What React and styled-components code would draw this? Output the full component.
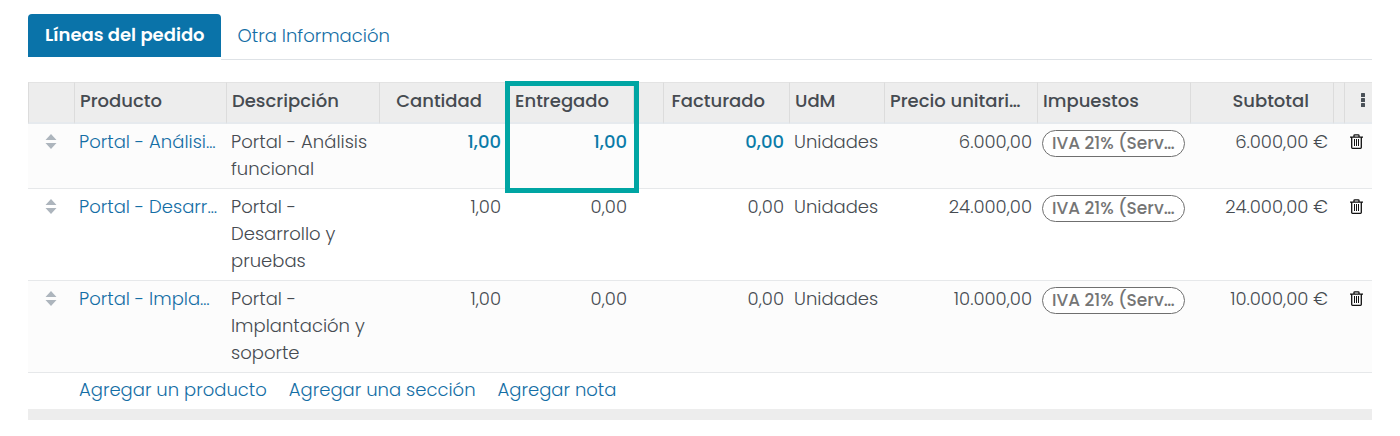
import React from "react";
import styled, { createGlobalStyle } from "styled-components";

const GlobalStyle = createGlobalStyle`
  *, *::before, *::after { box-sizing: border-box; }
  body {
    margin: 0;
    background: #fff;
    color: #464b51;
    font-family: Poppins, Inter, "Open Sans", sans-serif;
    font-size: 18px;
    font-weight: 300;
    line-height: 27px;
  }
  button { font: inherit; color: inherit; background: none; border: 0; padding: 0; cursor: pointer; }
`;

const Page = styled.main`
  padding: 14px 28px 16px;
`;

const TabBar = styled.div`
  display: flex;
  align-items: flex-start;
  margin-bottom: 22px;
`;

const Tab = styled.button`
  && {
    height: ${(p) => (p.$active ? 43 : 45)}px;
    padding: 0 16px 2px 17px;
    white-space: nowrap;
    border-radius: 4px 4px 0 0;
    color: ${(p) => (p.$active ? "#fff" : "#146ea5")};
    background: ${(p) => (p.$active ? "#0a73a9" : "transparent")};
    font-weight: ${(p) => (p.$active ? 600 : 300)};
  }
`;

const TabRest = styled.div`
  flex: 1;
  border-bottom: 1px solid #dee2e6;
`;

const Table = styled.table`
  width: 100%;
  table-layout: fixed;
  border-collapse: separate;
  border-spacing: 0;
`;

const Col = styled.col`
  width: ${(p) => p.$w}px;
`;

const Head = styled.th`
  position: relative;
  height: 42px;
  padding: 0 ${(p) => (p.$right ? 24 : p.$menu ? 7 : 5)}px 5px ${(p) => (p.$tight ? 0 : 5)}px;
  background: #ededed;
  border-top: 1px solid #e3e3e3;
  border-left: 1px solid #dcdcdc;
  border-bottom: 2px solid #e6eaee;
  text-align: ${(p) => (p.$right ? "right" : "left")};
  font-weight: 500;
  white-space: nowrap;
`;

const Row = styled.tr`
  background: ${(p) => (p.$shaded ? "#fcfcfc" : "#fff")};
`;

const Cell = styled.td`
  padding: 4px ${(p) => (p.$menu ? 9 : p.$wide ? 6 : 5)}px 6px ${(p) => (p.$right ? 0 : 5)}px;
  border-bottom: 1px solid #e6e8ea;
  vertical-align: top;
  text-align: ${(p) => (p.$right ? "right" : "left")};
  white-space: ${(p) => (p.$wrap ? "normal" : "nowrap")};
  color: ${(p) => (p.$strong ? "#0a7ba8" : "inherit")};
  font-weight: ${(p) => (p.$strong ? 500 : 300)};
`;

const Link = styled.a`
  color: #146ea5;
  text-decoration: none;
`;

const IconButton = styled.button`
  display: flex;
  align-items: center;
  justify-content: ${(p) => p.$align || "center"};
  width: 100%;
  height: 27px;
`;

const Tag = styled.span`
  display: block;
  height: 27px;
  margin-top: 2px;
  padding: 0 9px;
  border: 1px solid #6f6f6f;
  border-radius: 14px;
  background: #fff;
  color: #757575;
  font-size: 17px;
  font-weight: 500;
  line-height: 25px;
`;

const Highlight = styled.div`
  position: absolute;
  z-index: 1;
  top: -2px;
  left: -2px;
  width: 134px;
  height: 112px;
  border: 5px solid #00a5a3;
  pointer-events: none;
`;

const Actions = styled.div`
  display: flex;
  gap: 22px;
  padding: 3px 51px 6px;
  border-bottom: 11px solid #ededed;
`;

const SortIcon = () => (
  <svg width="12" height="15" viewBox="0 0 12 15" fill="#adb5bd" aria-hidden="true">
    <path d="M6 0 11.5 6H.5zM6 15 .5 9h11z" />
  </svg>
);

const TrashIcon = () => (
  <svg width="13" height="15" viewBox="0 0 13 15" fill="none" stroke="#111" aria-hidden="true">
    <path d="M0 3.2h13M4 3V1.6Q4 .8 4.8 .8h3.4Q9 .8 9 1.6V3M1.7 3.5v10Q1.7 14.3 2.5 14.3h8Q11.3 14.3 11.3 13.5v-10" strokeWidth="1.3" />
    <path d="M4.5 5v7M6.5 5v7M8.5 5v7" strokeWidth="1" />
  </svg>
);

const DotsIcon = () => (
  <svg width="4" height="14" viewBox="0 0 4 14" fill="#495057" aria-hidden="true">
    <rect width="4" height="4" rx=".5" />
    <rect y="5" width="4" height="4" rx=".5" />
    <rect y="10" width="4" height="4" rx=".5" />
  </svg>
);

const widths = [46, 152, 153, 127, 127, 30, 126, 95, 153, 153, 143, 11, 28];

const lines = [
  { product: "Portal - Análisi…", text: "Portal - Análisis funcional", qty: "1,00", delivered: "1,00", invoiced: "0,00", price: "6.000,00", strong: true },
  { product: "Portal - Desarr…", text: "Portal - Desarrollo y pruebas", qty: "1,00", delivered: "0,00", invoiced: "0,00", price: "24.000,00" },
  { product: "Portal - Impla…", text: "Portal - Implantación y soporte", qty: "1,00", delivered: "0,00", invoiced: "0,00", price: "10.000,00" },
];

export default function App() {
  return (
    <Page>
      <GlobalStyle />
      <TabBar role="tablist">
        <Tab role="tab" aria-selected="true" $active>Líneas del pedido</Tab>
        <TabRest>
          <Tab role="tab" aria-selected="false">Otra Información</Tab>
        </TabRest>
      </TabBar>
      <Table>
        <colgroup>
          {widths.map((w, i) => <Col key={i} $w={w} />)}
        </colgroup>
        <thead>
          <tr>
            <Head />
            <Head>Producto</Head>
            <Head>Descripción</Head>
            <Head $right>Cantidad</Head>
            <Head $right>Entregado<Highlight /></Head>
            <Head />
            <Head $right $tight>Facturado</Head>
            <Head>UdM</Head>
            <Head>Precio unitari…</Head>
            <Head>Impuestos</Head>
            <Head $right>Subtotal</Head>
            <Head $tight />
            <Head $menu>
              <IconButton $align="flex-end" aria-label="Columnas opcionales"><DotsIcon /></IconButton>
            </Head>
          </tr>
        </thead>
        <tbody>
          {lines.map((l, i) => (
            <Row key={l.product} $shaded={i % 2 === 0}>
              <Cell><IconButton aria-label="Mover línea"><SortIcon /></IconButton></Cell>
              <Cell><Link href="#producto">{l.product}</Link></Cell>
              <Cell $wrap>{l.text}</Cell>
              <Cell $right $strong={l.strong}>{l.qty}</Cell>
              <Cell $right $wide $strong={l.strong}>{l.delivered}</Cell>
              <Cell />
              <Cell $right $strong={l.strong}>{l.invoiced}</Cell>
              <Cell>Unidades</Cell>
              <Cell $right>{l.price}</Cell>
              <Cell><Tag>IVA 21% (Serv…</Tag></Cell>
              <Cell $right>{l.price} €</Cell>
              <Cell colSpan={2} $menu>
                <IconButton $align="flex-end" aria-label="Eliminar línea"><TrashIcon /></IconButton>
              </Cell>
            </Row>
          ))}
        </tbody>
      </Table>
      <Actions>
        <Link href="#producto">Agregar un producto</Link>
        <Link href="#seccion">Agregar una sección</Link>
        <Link href="#nota">Agregar nota</Link>
      </Actions>
    </Page>
  );
}
